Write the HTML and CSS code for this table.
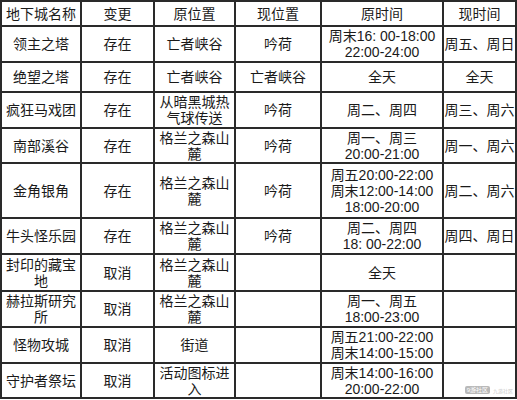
FILE: index.html
```html
<!DOCTYPE html>
<html lang="zh">
<head>
<meta charset="utf-8">
<title>地下城变更</title>
<link rel="stylesheet" href="styles.css">
</head>
<body>
<div class="sheet">
  <div class="grid">
    <div class="cell h">地下城名称</div><div class="cell h">变更</div><div class="cell h">原位置</div><div class="cell h">现位置</div><div class="cell h">原时间</div><div class="cell h">现时间</div>

    <div class="cell">领主之塔</div><div class="cell">存在</div><div class="cell">亡者峡谷</div><div class="cell">吟荷</div><div class="cell nw">周末16: 00-18:00<br>22:00-24:00</div><div class="cell nw">周五、周日</div>

    <div class="cell">绝望之塔</div><div class="cell">存在</div><div class="cell">亡者峡谷</div><div class="cell">亡者峡谷</div><div class="cell nw">全天</div><div class="cell nw">全天</div>

    <div class="cell">疯狂马戏团</div><div class="cell">存在</div><div class="cell">从暗黑城热气球传送</div><div class="cell">吟荷</div><div class="cell nw">周二、周四</div><div class="cell nw">周三、周六</div>

    <div class="cell">南部溪谷</div><div class="cell">存在</div><div class="cell">格兰之森山麓</div><div class="cell">吟荷</div><div class="cell nw">周一、周三<br>20:00-21:00</div><div class="cell nw">周一、周六</div>

    <div class="cell">金角银角</div><div class="cell">存在</div><div class="cell">格兰之森山麓</div><div class="cell">吟荷</div><div class="cell nw">周五20:00-22:00<br>周末12:00-14:00<br>18:00-20:00</div><div class="cell nw">周二、周六</div>

    <div class="cell">牛头怪乐园</div><div class="cell">存在</div><div class="cell">格兰之森山麓</div><div class="cell">吟荷</div><div class="cell nw">周二、周四<br>18: 00-22:00</div><div class="cell nw">周四、周日</div>

    <div class="cell">封印的藏宝地</div><div class="cell">取消</div><div class="cell">格兰之森山麓</div><div class="cell"></div><div class="cell nw">全天</div><div class="cell"></div>

    <div class="cell">赫拉斯研究所</div><div class="cell">取消</div><div class="cell">格兰之森山麓</div><div class="cell"></div><div class="cell nw">周一、周五<br>18:00-23:00</div><div class="cell"></div>

    <div class="cell">怪物攻城</div><div class="cell">取消</div><div class="cell">街道</div><div class="cell"></div><div class="cell nw">周五21:00-22:00<br>周末14:00-15:00</div><div class="cell"></div>

    <div class="cell">守护者祭坛</div><div class="cell">取消</div><div class="cell">活动图标进入</div><div class="cell"></div><div class="cell nw">周末14:00-16:00<br>20:00-22:00</div><div class="cell wm-host"><span class="wm"><span class="wm-logo">9游社区</span><span class="wm-small">九游社区</span></span></div>
  </div>
</div>
</body>
</html>
```
FILE: styles.css
```css
html, body {
  margin: 0;
  padding: 0;
  background: #ffffff;
}

.sheet {
  width: 517px;
  height: 400px;
}

.grid {
  display: grid;
  grid-template-columns: 78px 71px 79px 84px 120px 71px;
  grid-template-rows: 23px 34px 28px 34px 33px 53px 34px 35px 34px 34px 33px;
  gap: 2px;
  padding: 2px;
  background: #2a2a2a;
  width: 513px;
}

.cell {
  background: #ffffff;
  display: flex;
  align-items: center;
  justify-content: center;
  text-align: center;
  padding: 0 4px;
  font-family: "Liberation Sans", "Noto Sans CJK SC", sans-serif;
  font-size: 14px;
  line-height: 16px;
  color: #1a1a1a;
  overflow: hidden;
}

.nw {
  white-space: nowrap;
  padding: 0;
}

.wm-host {
  position: relative;
}

.wm {
  position: absolute;
  right: 2px;
  bottom: 3px;
  display: flex;
  align-items: flex-end;
  gap: 3px;
}

.wm-logo {
  font-size: 6px;
  line-height: 8px;
  color: #ffffff;
  background: #b9b9b9;
  border-radius: 2px;
  padding: 0 2px;
}

.wm-small {
  font-size: 5px;
  line-height: 6px;
  color: #c8c8c8;
}
```
